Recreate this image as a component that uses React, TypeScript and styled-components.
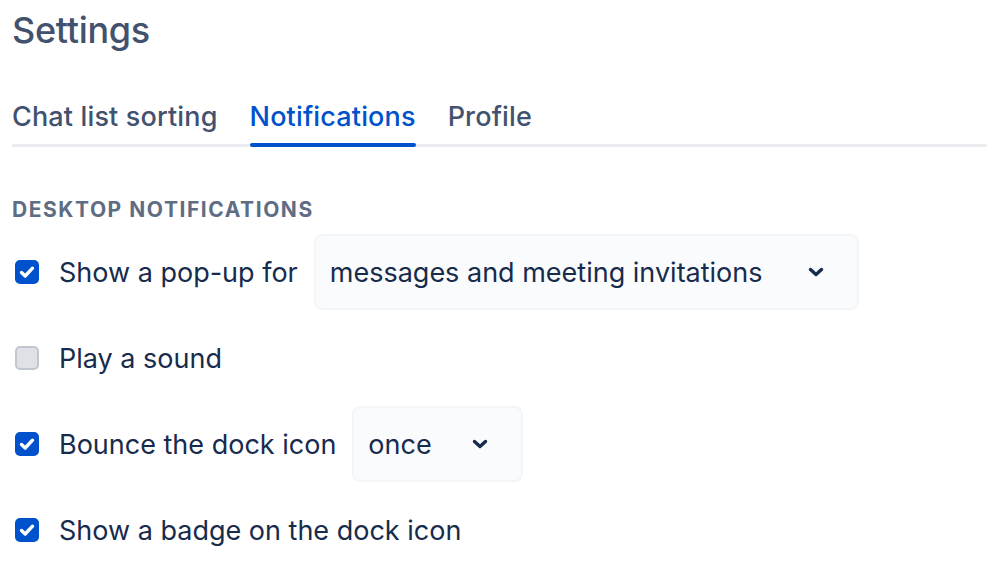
import React from "react";
import styled, { createGlobalStyle } from "styled-components";

const Global = createGlobalStyle`
  html, body { margin: 0; padding: 0; background: #ffffff; }
  body { font-family: Inter, "Noto Sans", sans-serif; -webkit-font-smoothing: antialiased; }
`;

const Page = styled.div`
  padding: 0 12px;
  display: flex;
  flex-direction: column;
`;

const Title = styled.h1`
  margin: 0;
  font-size: 36px;
  line-height: 60px;
  font-weight: 500;
  color: #42526e;
  letter-spacing: -0.3px;
`;

const TabBar = styled.div`
  margin-top: 40px;
  display: flex;
  gap: 32px;
  box-shadow: inset 0 -3px 0 #ebecf0;
`;

const Tab = styled.div<{ $active?: boolean }>`
  position: relative;
  font-size: 27px;
  line-height: 34px;
  padding-bottom: 13px;
  font-weight: 500;
  letter-spacing: 0.15px;
  color: ${(p) => (p.$active ? "#0052cc" : "#42526e")};
  &::after {
    content: "";
    display: ${(p) => (p.$active ? "block" : "none")};
    position: absolute;
    left: 0;
    right: 0;
    bottom: 0;
    height: 4px;
    border-radius: 2px;
    background: #0052cc;
  }
`;

const SectionTitle = styled.h2`
  margin: 50px 0 0;
  font-size: 21px;
  line-height: 26px;
  font-weight: 700;
  color: #5e6c84;
  letter-spacing: 1.55px;
`;

const Rows = styled.div`
  margin-top: 11px;
  display: flex;
  flex-direction: column;
  gap: 10px;
`;

const Row = styled.label`
  display: flex;
  align-items: center;
  min-height: 76px;
`;

const Box = styled.span<{ $checked?: boolean }>`
  box-sizing: border-box;
  width: 24px;
  height: 24px;
  margin-left: 3px;
  border-radius: 5px;
  display: flex;
  align-items: center;
  justify-content: center;
  background: ${(p) => (p.$checked ? "#0052cc" : "#dfe1e6")};
  border: 2px solid ${(p) => (p.$checked ? "#0052cc" : "#c1c7d0")};
`;

const LabelText = styled.span`
  margin-left: 20px;
  font-size: 27px;
  color: #172b4d;
`;

const Select = styled.div<{ $width: number }>`
  box-sizing: border-box;
  margin-left: 16px;
  width: ${(p) => p.$width}px;
  height: 76px;
  display: flex;
  align-items: center;
  justify-content: space-between;
  padding: 0 33px 0 14px;
  background: #fafbfc;
  border: 2px solid #f4f5f7;
  border-radius: 8px;
  font-size: 27px;
  color: #172b4d;
`;

const Check = () => (
  <svg width="16" height="14" viewBox="0 0 16 14">
    <path d="M2.5 7.5 L6.2 11 L13.5 3.2" fill="none" stroke="#fff" strokeWidth="3.4" strokeLinecap="round" strokeLinejoin="round" />
  </svg>
);

const Chevron = () => (
  <svg width="16" height="10" viewBox="0 0 16 10">
    <path d="M2.5 2.5 L8 7.5 L13.5 2.5" fill="none" stroke="#172b4d" strokeWidth="3.4" strokeLinecap="round" strokeLinejoin="round" />
  </svg>
);

const CheckBox = ({ checked }: { checked?: boolean }) => (
  <Box $checked={checked}>{checked && <Check />}</Box>
);

export default function App() {
  return (
    <Page>
      <Global />
      <Title>Settings</Title>
      <TabBar>
        <Tab>Chat list sorting</Tab>
        <Tab $active>Notifications</Tab>
        <Tab>Profile</Tab>
      </TabBar>
      <SectionTitle>DESKTOP NOTIFICATIONS</SectionTitle>
      <Rows>
        <Row>
          <CheckBox checked />
          <LabelText>Show a pop-up for</LabelText>
          <Select $width={545}>
            <span>messages and meeting invitations</span>
            <Chevron />
          </Select>
        </Row>
        <Row>
          <CheckBox />
          <LabelText>Play a sound</LabelText>
        </Row>
        <Row>
          <CheckBox checked />
          <LabelText>Bounce the dock icon</LabelText>
          <Select $width={171}>
            <span>once</span>
            <Chevron />
          </Select>
        </Row>
        <Row>
          <CheckBox checked />
          <LabelText>Show a badge on the dock icon</LabelText>
        </Row>
      </Rows>
    </Page>
  );
}
